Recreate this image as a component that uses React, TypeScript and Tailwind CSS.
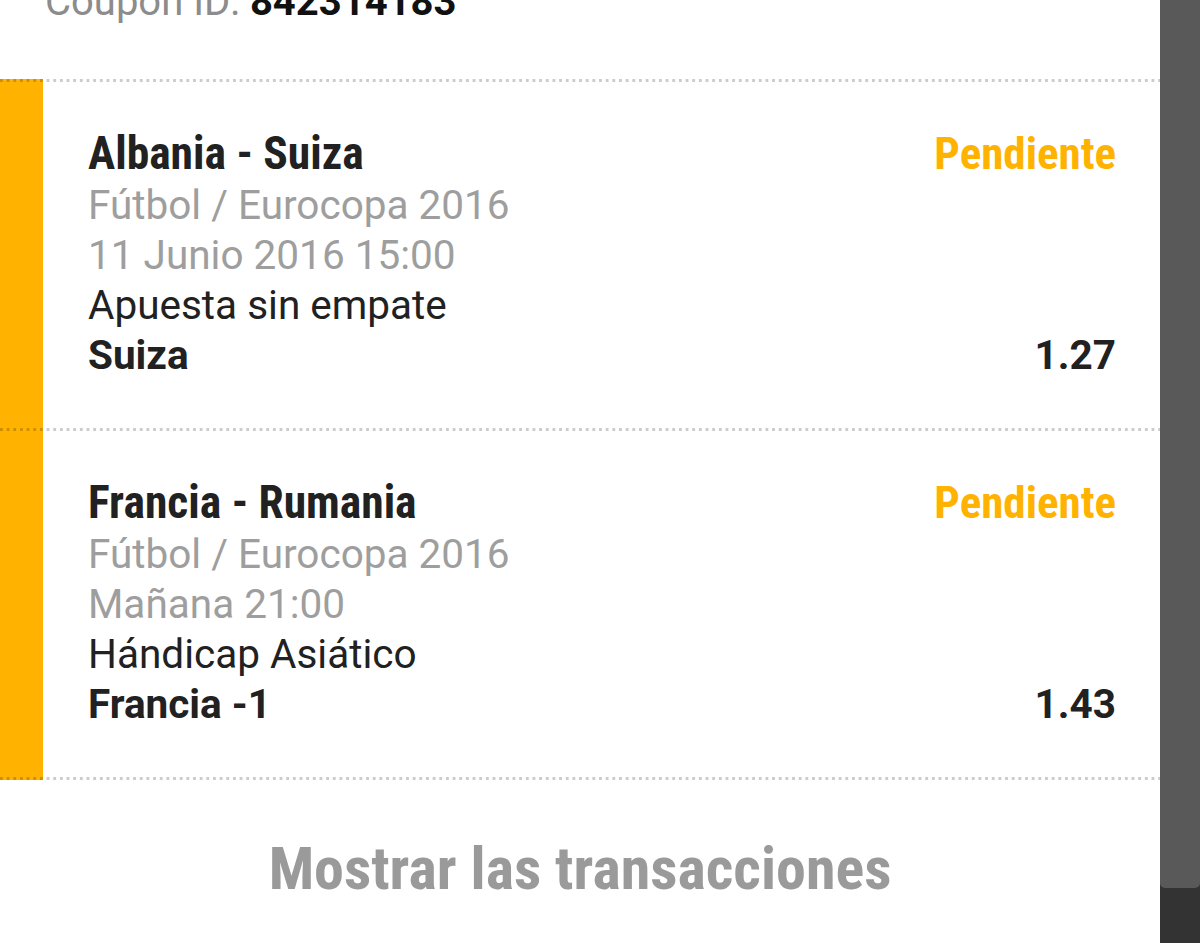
const condensed =
  "font-['Roboto_Condensed','Liberation_Sans_Narrow',Roboto,sans-serif] [font-stretch:condensed]";

const separator =
  "h-[3px] [background:linear-gradient(90deg,rgba(0,0,0,.2)_2.7px,transparent_0)_0_0/6.67px_100%,linear-gradient(90deg,#ffb300_43px,#fff_0)]";

interface Bet {
  match: string;
  category: string;
  date: string;
  market: string;
  selection: string;
  odds: string;
}

const bets: Bet[] = [
  {
    match: 'Albania - Suiza',
    category: 'Fútbol / Eurocopa 2016',
    date: '11 Junio 2016 15:00',
    market: 'Apuesta sin empate',
    selection: 'Suiza',
    odds: '1.27',
  },
  {
    match: 'Francia - Rumania',
    category: 'Fútbol / Eurocopa 2016',
    date: 'Mañana 21:00',
    market: 'Hándicap Asiático',
    selection: 'Francia -1',
    odds: '1.43',
  },
];

function BetRow({ bet }: { bet: Bet }) {
  return (
    <div className="flex">
      <div className="w-[43px] shrink-0 bg-[#ffb300]" />
      <div className="flex-1 pl-[45px] pr-[44px] pt-[46px] pb-[48px] text-[40.5px] leading-[50px] font-['Roboto',sans-serif]">
        {/* Match + status */}
        <div className="flex items-center justify-between leading-[52px]">
          <span className={`${condensed} font-bold text-[45.5px] text-[#212121]`}>{bet.match}</span>
          <span className={`${condensed} font-bold text-[45px] text-[#ffb300]`}>Pendiente</span>
        </div>
        <div className="text-[#9e9e9e]">{bet.category}</div>
        <div className="text-[#9e9e9e]">{bet.date}</div>
        <div className="text-[#212121]">{bet.market}</div>
        <div className="flex justify-between font-bold text-[#212121]">
          <span>{bet.selection}</span>
          <span>{bet.odds}</span>
        </div>
      </div>
    </div>
  );
}

export default function App() {
  return (
    <div className="flex h-[943px] w-[1200px] overflow-hidden bg-white">
      <div className="flex-1">
        {/* Coupon header, scrolled partly out of view */}
        <div className="h-[79px] overflow-hidden pl-[45px]">
          <div className="-mt-[23px] text-[40px] leading-[50px] font-['Roboto',sans-serif]">
            <span className="text-[#8c8c8c]">Coupon ID: </span>
            <span className="font-bold text-[#111]">842314183</span>
          </div>
        </div>

        {bets.map((bet) => (
          <div key={bet.match}>
            <div className={separator} />
            <BetRow bet={bet} />
          </div>
        ))}
        <div className={separator} />

        <div className="pt-[59px] text-center">
          <span className={`${condensed} font-bold text-[60px] leading-[60px] text-[#9a9a9a]`}>
            Mostrar las transacciones
          </span>
        </div>
      </div>

      {/* Scrollbar */}
      <div className="flex w-[40px] flex-col bg-[#333]">
        <div className="h-[888px] rounded-b-[5px] bg-[#595959]" />
      </div>
    </div>
  );
}
